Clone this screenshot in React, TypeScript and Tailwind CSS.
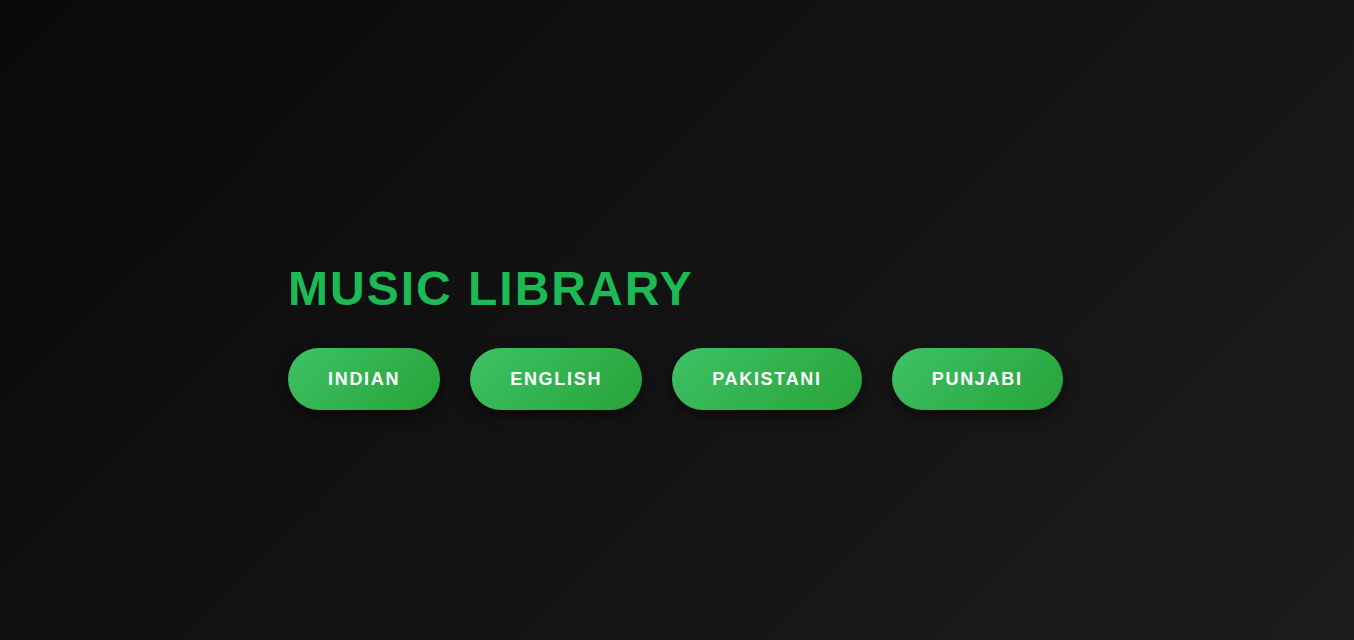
const genres = ['Indian', 'English', 'Pakistani', 'Punjabi'];

export default function App() {
  return (
    <div className="min-h-screen w-full bg-[linear-gradient(135deg,#0a0a0a_0%,#1c1c1c_100%)] font-['Liberation_Sans',Arial,sans-serif]">
      <div className="pl-[288px] pt-[261px]">
        {/* Heading */}
        <h1 className="text-[48px] leading-[55px] font-bold tracking-[2px] text-[#1db954] uppercase">
          Music Library
        </h1>

        {/* Genre buttons */}
        <div className="mt-[32px] flex gap-[30px]">
          {genres.map((g) => (
            <button
              key={g}
              className="rounded-full bg-[linear-gradient(135deg,#3ec266_0%,#27a338_100%)] px-10 py-5 text-[18px] leading-[22px] font-bold uppercase tracking-[1.7px] text-white shadow-[0_6px_14px_rgba(0,0,0,0.5)]"
            >
              {g}
            </button>
          ))}
        </div>
      </div>
    </div>
  );
}
